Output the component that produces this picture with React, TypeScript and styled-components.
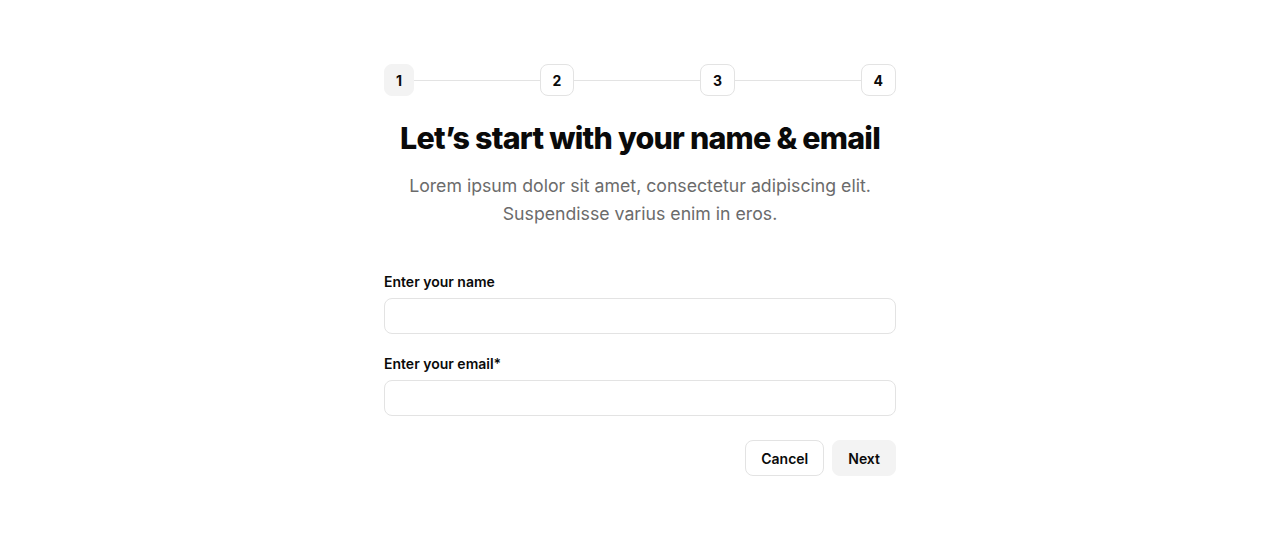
import React from "react";
import styled, { createGlobalStyle } from "styled-components";

const Global = createGlobalStyle`
  html, body { margin: 0; padding: 0; background: #ffffff; }
  body { font-family: Inter, "Noto Sans", Arial, sans-serif; color: #0a0a0a; }
  * { box-sizing: border-box; }
`;

const Page = styled.div`
  display: flex;
  justify-content: center;
  padding-top: 64px;
`;

const Card = styled.div`
  width: 512px;
  display: flex;
  flex-direction: column;
`;

const Stepper = styled.div`
  display: flex;
  align-items: center;
`;

const Step = styled.div<{ $active?: boolean }>`
  height: 32px;
  min-width: 30px;
  padding: 0 ${(p) => (p.$active ? "11px" : "12px")};
  display: flex;
  align-items: center;
  justify-content: center;
  border-radius: 8px;
  font-size: 14px;
  font-weight: 700;
  color: #0a0a0a;
  background: ${(p) => (p.$active ? "#f3f3f3" : "#ffffff")};
  border: 1px solid ${(p) => (p.$active ? "#f3f3f3" : "#e3e3e3")};
`;

const Line = styled.div`
  flex: 1;
  height: 1px;
  background: #e3e3e3;
`;

const Title = styled.h1`
  margin: 22px 0 0;
  text-align: center;
  font-size: 30.4px;
  line-height: 40px;
  font-weight: 800;
  letter-spacing: -0.025em;
  color: #0a0a0a;
`;

const Subtitle = styled.p`
  margin: 14px 0 0;
  text-align: center;
  font-size: 17.7px;
  line-height: 28px;
  color: #6b6b6b;
  font-weight: 400;
`;

const Form = styled.form`
  margin-top: 44px;
  display: flex;
  flex-direction: column;
  gap: 20px;
`;

const Field = styled.div`
  display: flex;
  flex-direction: column;
  gap: 6px;
`;

const Label = styled.label`
  font-size: 14px;
  line-height: 20px;
  font-weight: 600;
  color: #0a0a0a;
`;

const Input = styled.input`
  height: 36px;
  width: 100%;
  border: 1px solid #e3e3e3;
  border-radius: 8px;
  padding: 0 12px;
  font-family: inherit;
  font-size: 14px;
  outline: none;
  background: #fff;
`;

const Actions = styled.div`
  margin-top: 4px;
  display: flex;
  justify-content: flex-end;
  gap: 8px;
`;

const Button = styled.button<{ $variant?: "outline" | "soft" }>`
  height: 36px;
  padding: 0 15px;
  border-radius: 8px;
  font-family: inherit;
  font-size: 14px;
  font-weight: 600;
  color: #0a0a0a;
  cursor: pointer;
  background: ${(p) => (p.$variant === "soft" ? "#f3f3f3" : "#ffffff")};
  border: 1px solid ${(p) => (p.$variant === "soft" ? "#f3f3f3" : "#e3e3e3")};
`;

export default function App() {
  const steps = [1, 2, 3, 4];
  return (
    <>
      <Global />
      <Page>
        <Card>
          <Stepper>
            {steps.map((s, i) => (
              <React.Fragment key={s}>
                {i > 0 && <Line />}
                <Step $active={s === 1}>{s}</Step>
              </React.Fragment>
            ))}
          </Stepper>
          <Title>Let’s start with your name &amp; email</Title>
          <Subtitle>
            Lorem ipsum dolor sit amet, consectetur adipiscing elit.
            <br />
            Suspendisse varius enim in eros.
          </Subtitle>
          <Form onSubmit={(e) => e.preventDefault()}>
            <Field>
              <Label>Enter your name</Label>
              <Input type="text" />
            </Field>
            <Field>
              <Label>Enter your email*</Label>
              <Input type="email" />
            </Field>
            <Actions>
              <Button type="button" $variant="outline">Cancel</Button>
              <Button type="submit" $variant="soft">Next</Button>
            </Actions>
          </Form>
        </Card>
      </Page>
    </>
  );
}
